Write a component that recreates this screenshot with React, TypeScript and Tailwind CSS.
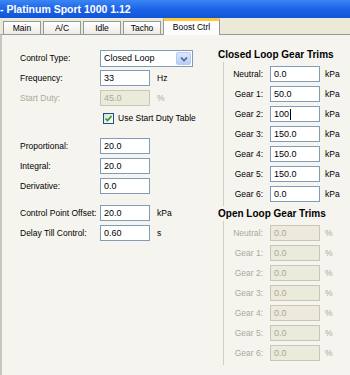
const font = "font-['Liberation_Sans','Arimo',sans-serif]";

const Field = ({
  value,
  disabled,
  caret,
}: {
  value: string;
  disabled?: boolean;
  caret?: boolean;
}) => (
  <div
    className={`w-[50px] h-[16px] flex items-center px-[3px] text-[9px] leading-none border whitespace-nowrap ${
      disabled
        ? "bg-[#ebeadb] border-[#c9c7ba] text-[#aca899]"
        : "bg-white border-[#7f9db9] text-black"
    }`}
  >
    {value}
    {caret && <span className="ml-px w-px h-[11px] bg-black" />}
  </div>
);

const Row = ({
  label,
  value,
  unit,
  disabled,
  className = "",
}: {
  label: string;
  value: string;
  unit?: string;
  disabled?: boolean;
  className?: string;
}) => (
  <div className={`flex items-center h-[16px] ${className}`}>
    <span
      className={`w-[80px] text-[8.5px] whitespace-nowrap ${disabled ? "text-[#aca899]" : "text-black"}`}
    >
      {label}
    </span>
    <Field value={value} disabled={disabled} />
    {unit && (
      <span
        className={`ml-[7px] text-[8.5px] ${disabled ? "text-[#aca899]" : "text-black"}`}
      >
        {unit}
      </span>
    )}
  </div>
);

const GearRow = ({
  label,
  value,
  unit,
  disabled,
  caret,
}: {
  label: string;
  value: string;
  unit: string;
  disabled?: boolean;
  caret?: boolean;
}) => (
  <div className="flex items-center h-[16px]">
    <span
      className={`w-[46px] text-right pr-[7px] text-[8.5px] whitespace-nowrap ${disabled ? "text-[#aca899]" : "text-black"}`}
    >
      {label}
    </span>
    <Field value={value} disabled={disabled} caret={caret} />
    <span
      className={`ml-[5px] text-[8.5px] ${disabled ? "text-[#aca899]" : "text-black"}`}
    >
      {unit}
    </span>
  </div>
);

const tabs = ["Main", "A/C", "Idle", "Tacho"];

export default function App() {
  const closed = ["0.0", "50.0", "100", "150.0", "150.0", "150.0", "0.0"];
  const names = ["Neutral:", "Gear 1:", "Gear 2:", "Gear 3:", "Gear 4:", "Gear 5:", "Gear 6:"];

  return (
    <div className={`w-[350px] h-[375px] overflow-hidden flex flex-col bg-[#ece9d8] ${font}`}>
      {/* title bar */}
      <div className="h-[18px] shrink-0 bg-gradient-to-b from-[#3b86f5] via-[#1e63e6] to-[#0f55d8] flex items-center">
        <span className="text-white text-[10.5px] font-bold leading-none">
          - Platinum Sport 1000 1.12
        </span>
      </div>

      {/* tabs */}
      <div className="h-[16px] shrink-0 flex items-end pl-[3px]">
        {tabs.map((t) => (
          <div
            key={t}
            className="w-[38px] h-[13px] mr-[2px] border border-b-0 border-[#919b9c] bg-gradient-to-b from-white to-[#ecebe5] text-[8.5px] leading-none flex items-center justify-center"
          >
            {t}
          </div>
        ))}
        <div className="w-[57px] h-[17px] -mb-px z-10 border border-b-0 border-[#919b9c] border-t-[3px] border-t-[#ffc83c] bg-[#fcfcfe] text-[8.5px] leading-none flex justify-center pt-[2px]">
          Boost Ctrl
        </div>
      </div>

      {/* panel */}
      <div className="flex-1 flex bg-[#f5f4ef] border-t border-l-2 border-[#919b9c] border-l-[#c8c6bc]">
        {/* left column */}
        <div className="w-[216px] pl-[18px] pt-[15px] flex flex-col">
          <div className="flex items-center h-[17px]">
            <span className="w-[80px] text-[8.5px]">Control Type:</span>
            <div className="w-[93px] h-[17px] bg-white border border-[#7f9db9] flex items-center pl-[3px] text-[9px]">
              <span className="flex-1">Closed Loop</span>
              <div className="w-[15px] h-[13px] mr-px rounded-[2px] bg-gradient-to-b from-[#dce7fd] to-[#b6ccf8] border border-[#b8cbf4] flex items-center justify-center">
                <svg width="8" height="6" viewBox="0 0 8 6">
                  <path d="M1 1.5 L4 4.5 L7 1.5" stroke="#4d6185" strokeWidth="1.6" fill="none" />
                </svg>
              </div>
            </div>
          </div>
          <Row className="mt-[3px]" label="Frequency:" value="33" unit="Hz" />
          <Row className="mt-[4px]" label="Start Duty:" value="45.0" unit="%" disabled />
          <div className="flex items-center h-[14px] mt-[5px] pl-[83px]">
            <div className="w-[11px] h-[11px] border border-[#1c5180] bg-gradient-to-br from-[#dcdcd7] to-white flex items-center justify-center">
              <svg width="9" height="9" viewBox="0 0 9 9">
                <path d="M1.5 4.5 L3.5 6.5 L7.5 2" stroke="#21a121" strokeWidth="1.7" fill="none" />
              </svg>
            </div>
            <span className="ml-[4px] text-[8.5px] whitespace-nowrap">Use Start Duty Table</span>
          </div>
          <Row className="mt-[13px]" label="Proportional:" value="20.0" />
          <Row className="mt-[4px]" label="Integral:" value="20.0" />
          <Row className="mt-[4px]" label="Derivative:" value="0.0" />
          <Row className="mt-[11px]" label="Control Point Offset:" value="20.0" unit="kPa" />
          <Row className="mt-[4px]" label="Delay Till Control:" value="0.60" unit="s" />
        </div>

        {/* right column */}
        <div className="flex-1 flex flex-col pt-[15px]">
          <span className="text-[10px] font-bold leading-none whitespace-nowrap">Closed Loop Gear Trims</span>
          <div className="ml-[5px] mt-[2px] border-l border-[#d0d0bf] flex flex-col gap-[4px] py-[4px]">
            {names.map((n, i) => (
              <GearRow key={n} label={n} value={closed[i]} unit="kPa" caret={i === 2} />
            ))}
          </div>
          <span className="mt-[3px] text-[10px] font-bold leading-none whitespace-nowrap">Open Loop Gear Trims</span>
          <div className="ml-[5px] mt-[2px] border-l border-[#d0d0bf] flex flex-col gap-[4px] py-[4px]">
            {names.map((n) => (
              <GearRow key={n} label={n} value="0.0" unit="%" disabled />
            ))}
          </div>
        </div>
      </div>
    </div>
  );
}
